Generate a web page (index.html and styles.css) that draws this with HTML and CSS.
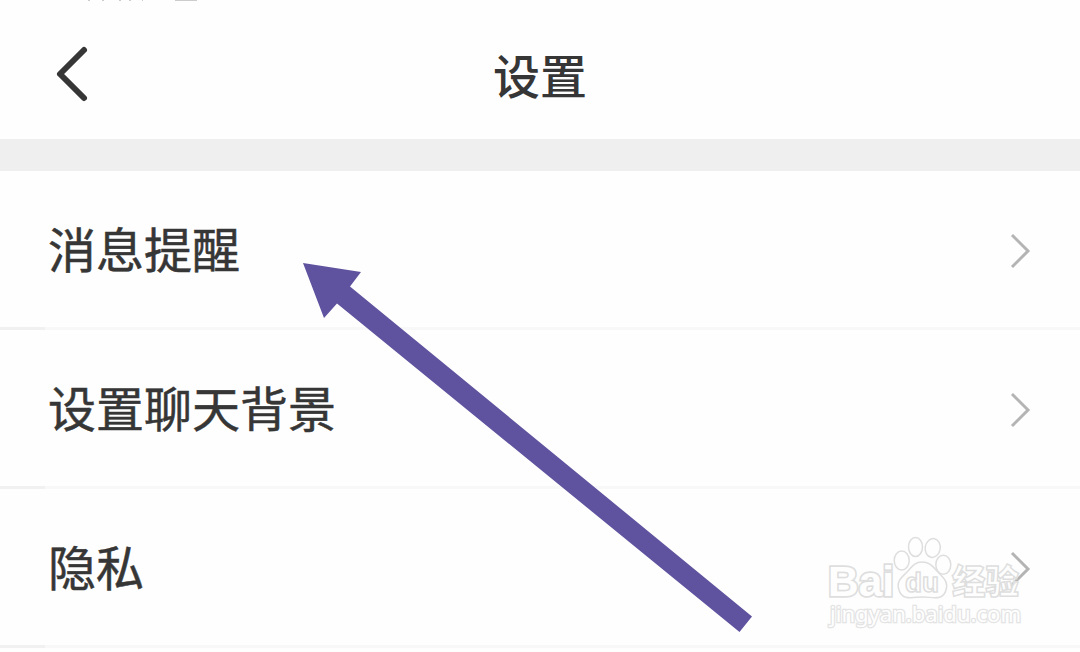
FILE: index.html
```html
<!DOCTYPE html>
<html lang="zh-CN">
<head>
  <meta charset="UTF-8">
  <meta name="viewport" content="width=device-width, initial-scale=1.0">
  <title>设置</title>
  <link rel="stylesheet" href="styles.css">
</head>
<body>
  <div class="page">
    <header class="header">
      <!-- bottom edge of the status line -->
      <svg class="status-edge" width="120" height="1" viewBox="0 0 120 1">
        <path d="M8 .5h2M22 .5h2M39 .5h2M49 .5h2M62 .5h1M95 .5h22" stroke="#ccc"/>
      </svg>
      <svg class="back" width="36" height="60" viewBox="0 0 36 60">
        <path d="M30 6 L6 30 L30 54" fill="none" stroke="#363636" stroke-width="6" stroke-linecap="round" stroke-linejoin="round"/>
      </svg>
      <h1 class="title">设置</h1>
    </header>

    <ul class="list">
      <li class="item">
        <span class="label">消息提醒</span>
        <svg class="arrow" width="22" height="36" viewBox="0 0 22 36"><path d="M3 2 L19 18 L3 34"/></svg>
      </li>
      <li class="item">
        <span class="label">设置聊天背景</span>
        <svg class="arrow" width="22" height="36" viewBox="0 0 22 36"><path d="M3 2 L19 18 L3 34"/></svg>
      </li>
      <li class="item">
        <span class="label">隐私</span>
        <svg class="arrow" width="22" height="36" viewBox="0 0 22 36"><path d="M3 2 L19 18 L3 34"/></svg>
      </li>
    </ul>

    <svg class="pointer" width="450" height="371" viewBox="0 0 450 371">
      <polygon points="0,0 58,9 47,23.5 449,353.5 436.5,369 34,40.5 21,55" fill="#5f529f"/>
    </svg>

    <svg class="watermark" width="200" height="100" viewBox="0 0 200 100">
      <g class="outline">
        <text class="wm-bai" x="2" y="66" textLength="66" lengthAdjust="spacingAndGlyphs">Bai</text>
        <ellipse cx="75.700" cy="30.500" rx="7.500" ry="9.500"/>
        <ellipse cx="89.500" cy="17" rx="7" ry="9.500"/>
        <ellipse cx="106.700" cy="18" rx="7.500" ry="9.500" transform="rotate(10 106.700 18)"/>
        <ellipse cx="117.300" cy="34.700" rx="7.500" ry="9.500"/>
        <path d="M96 32 C88 32 85 38 80 43 C75 48 70 52 73 60 C76 71 87 67 97 67 C107 67 117 71 120 60 C123 51 116 47 112 42 C107 37 104 32 96 32Z"/>
        <text class="wm-du" x="79" y="62" textLength="34" lengthAdjust="spacingAndGlyphs">du</text>
        <text class="wm-cn" x="126" y="64" textLength="67" lengthAdjust="spacingAndGlyphs">经验</text>
        <text class="wm-url" x="4" y="92" textLength="191" lengthAdjust="spacingAndGlyphs">jingyan.baidu.com</text>
      </g>
    </svg>
  </div>
</body>
</html>
```

FILE: styles.css
```css
* {
  box-sizing: border-box;
}

body {
  margin: 0;
  background-color: #fefefe;
  color: #363636;
  font-family: "Noto Sans CJK SC", sans-serif;
}

.page {
  position: relative;
  height: 652px;
  overflow: hidden;
}

/* Header */
.header {
  position: relative;
  display: flex;
  align-items: center;
  justify-content: center;
  height: 171px;
  padding-bottom: 16px;
  border-bottom: 32px solid #efefef;
}

.back {
  position: absolute;
  left: 54px;
  top: 44px;
}

.status-edge {
  position: absolute;
  left: 80px;
  top: 0;
}

.title {
  margin: 0;
  padding-top: 25px;
  font-size: 47px;
  font-weight: 500;
  line-height: 60px;
}

/* List */
.list {
  margin: 0;
  padding: 0;
  list-style: none;
}

.item {
  display: flex;
  align-items: center;
  justify-content: space-between;
  height: 159px;
  padding: 0 49px 0 48px;
  border-style: solid;
  border-image: linear-gradient(to right, #f1f1f1 48px, #f8f8f8 48px) 3;
  border-width: 0 0 3px;
}

.label {
  padding-bottom: 4px;
  font-size: 48px;
  line-height: 60px;
  -webkit-text-stroke: 0.5px #363636;
}

.arrow {
  margin-top: 3px;
}

.arrow path {
  fill: none;
  stroke: #b4b4b4;
  stroke-width: 3;
}

/* Overlays */
.pointer {
  position: absolute;
  left: 303px;
  top: 263px;
}

.watermark {
  position: absolute;
  left: 826px;
  top: 530px;
}

.outline {
  fill: #fefefe;
  fill-opacity: 0.7;
  stroke: #dedede;
  stroke-width: 1.5;
}

.wm-bai {
  font: bold 43px "Liberation Sans", sans-serif;
  fill-opacity: 1;
  stroke-width: 3.5;
  paint-order: stroke;
}

.wm-du {
  font: bold 27px "Liberation Sans", sans-serif;
}

.wm-cn {
  font: 900 34px "Noto Sans CJK SC", sans-serif;
}

.wm-url {
  font: 22px "Noto Sans", sans-serif;
  fill-opacity: 1;
  stroke: #e4e4e4;
  stroke-width: 2.6;
  paint-order: stroke;
}
```
